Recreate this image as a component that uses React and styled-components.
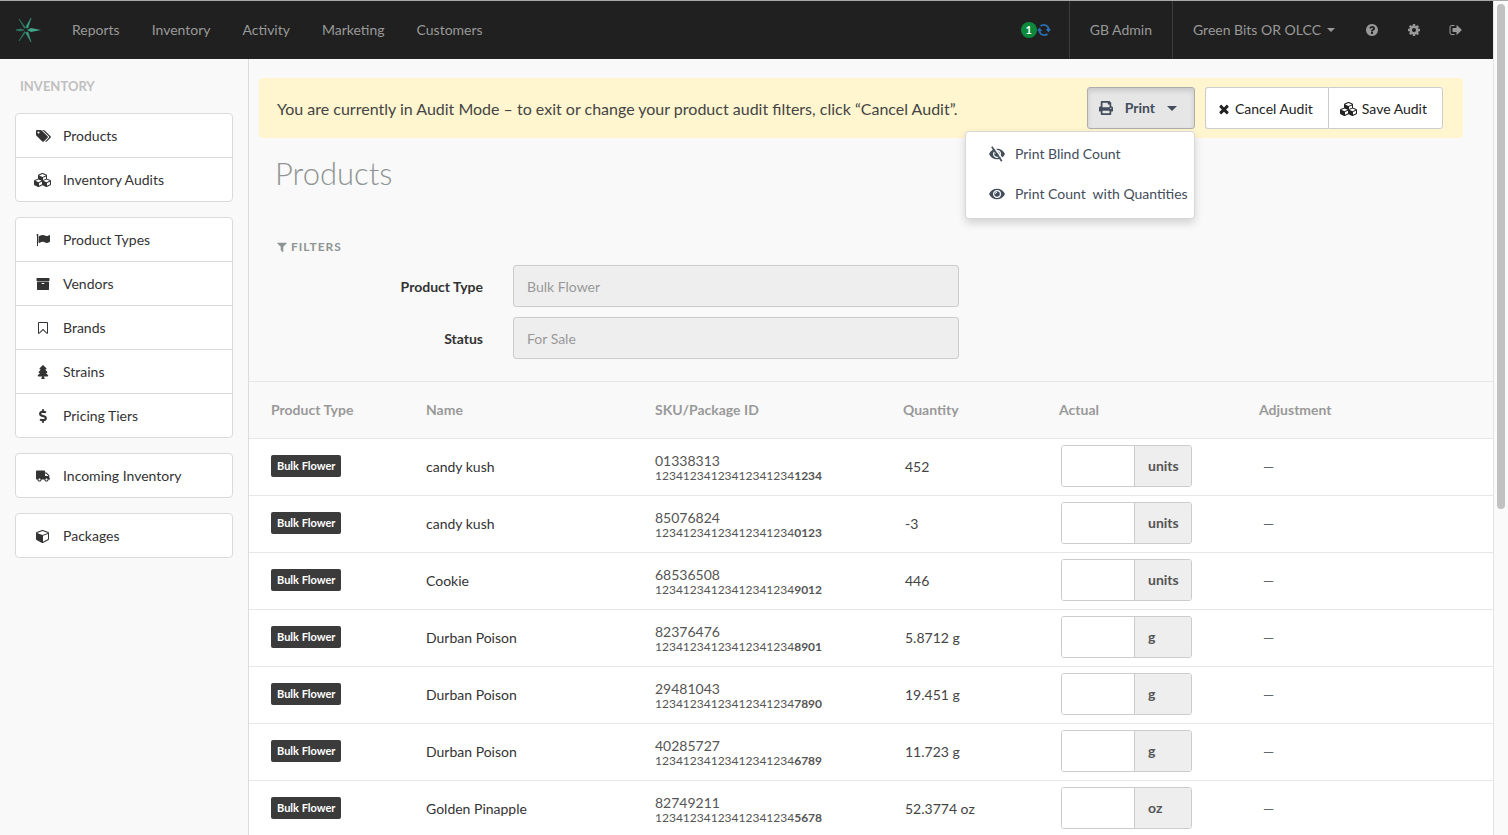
import React from "react";
import styled, { createGlobalStyle } from "styled-components";
import { FaTree, FaDollarSign, FaTruck, FaPrint } from "react-icons/fa";

const GlobalStyle = createGlobalStyle`
  *, *::before, *::after { box-sizing: border-box; }
  body {
    margin: 0;
    background: #f9f9f9;
    color: #333;
    font: 14px/20px Lato, "Open Sans", sans-serif;
  }
  button, input { font: inherit; color: inherit; }
  a { color: inherit; text-decoration: none; }
`;

const PATHS = {
  signOut: "M704 1440q0 4 1 20t.5 26.5-3 23.5-10 19.5-20.5 6.5h-320q-119 0-203.5-84.5t-84.5-203.5v-704q0-119 84.5-203.5t203.5-84.5h320q13 0 22.5 9.5t9.5 22.5q0 4 1 20t.5 26.5-3 23.5-10 19.5-20.5 6.5h-320q-66 0-113 47t-47 113v704q0 66 47 113t113 47h312l11.5 1 11.5 3 8 5.5 7 9 2 13.5zm928-544q0 26-19 45l-544 544q-19 19-45 19t-45-19-19-45v-288h-448q-26 0-45-19t-19-45v-384q0-26 19-45t45-19h448v-288q0-26 19-45t45-19 45 19l544 544q19 19 19 45z",
  bookmark: "M1408 256h-1024v1242l423-406 89-85 89 85 423 406v-1242zm12-128q23 0 44 9 33 13 52.5 41t19.5 62v1289q0 34-19.5 62t-52.5 41q-19 8-44 8-48 0-83-32l-441-424-441 424q-36 33-83 33-23 0-44-9-33-13-52.5-41t-19.5-62v-1289q0-34 19.5-62t52.5-41q21-9 44-9h1048z",
  archive: "M1088 832q0-26-19-45t-45-19h-256q-26 0-45 19t-19 45 19 45 45 19h256q26 0 45-19t19-45zm576-192v960q0 26-19 45t-45 19h-1408q-26 0-45-19t-19-45v-960q0-26 19-45t45-19h1408q26 0 45 19t19 45zm64-448v256q0 26-19 45t-45 19h-1536q-26 0-45-19t-19-45v-256q0-26 19-45t45-19h1536q26 0 45 19t19 45z",
  close: "M1490 1322q0 40-28 68l-136 136q-28 28-68 28t-68-28l-294-294-294 294q-28 28-68 28t-68-28l-136-136q-28-28-28-68t28-68l294-294-294-294q-28-28-28-68t28-68l136-136q28-28 68-28t68 28l294 294 294-294q28-28 68-28t68 28l136 136q28 28 28 68t-28 68l-294 294 294 294q28 28 28 68z",
  filter: "M1595 295q17 41-14 70l-493 493v742q0 42-39 59-13 5-25 5-27 0-45-19l-256-256q-19-19-19-45v-486l-493-493q-31-29-14-70 17-39 59-39h1280q42 0 59 39z",
  help: "M1024 1376v-192q0-14-9-23t-23-9h-192q-14 0-23 9t-9 23v192q0 14 9 23t23 9h192q14 0 23-9t9-23zm256-672q0-88-55.5-163t-138.5-116-170-41q-243 0-371 213-15 24 8 42l132 100q7 6 19 6 16 0 25-12 53-68 86-92 34-24 86-24 48 0 85.5 26t37.5 59q0 38-20 61t-68 45q-63 28-115.5 86.5t-52.5 125.5v36q0 14 9 23t23 9h192q14 0 23-9t9-23q0-19 21.5-49.5t54.5-49.5q32-18 49-28.5t46-35 44.5-48 28-60.5 12.5-81zm384 192q0 209-103 385.5t-279.5 279.5-385.5 103-385.5-103-279.5-279.5-103-385.5 103-385.5 279.5-279.5 385.5-103 385.5 103 279.5 279.5 103 385.5z",
  cog: "M1152 896q0-106-75-181t-181-75-181 75-75 181 75 181 181 75 181-75 75-181zm512-109v222q0 12-8 23t-20 13l-185 28q-19 54-39 91 35 50 107 138 10 12 10 25t-9 23q-27 37-99 108t-94 71q-12 0-26-9l-138-108q-44 23-91 38-16 136-29 186-7 28-36 28h-222q-14 0-24.5-8.5t-11.5-21.5l-28-184q-49-16-90-37l-141 107q-10 9-25 9-14 0-25-11-126-114-165-168-7-10-7-23 0-12 8-23 15-21 51-66.5t54-70.5q-27-50-41-99l-183-27q-13-2-21-12.5t-8-23.5v-222q0-12 8-23t19-13l186-28q14-46 39-92-40-57-107-138-10-12-10-24 0-10 9-23 26-36 98.5-107.5t94.5-71.5q13 0 26 10l138 107q44-23 91-38 16-136 29-186 7-28 36-28h222q14 0 24.5 8.5t11.5 21.5l28 184q49 16 90 37l142-107q9-9 24-9 13 0 25 10 129 119 165 170 7 8 7 22 0 12-8 23-15 21-51 66.5t-54 70.5q26 50 41 98l183 28q13 2 21 12.5t8 23.5z",
  tags: "M448 448q0-53-37.5-90.5t-90.5-37.5-90.5 37.5-37.5 90.5 37.5 90.5 90.5 37.5 90.5-37.5 37.5-90.5zm1067 576q0 53-37 90l-491 492q-39 37-91 37-53 0-90-37l-715-716q-38-37-64.5-101t-26.5-117v-416q0-52 38-90t90-38h416q53 0 117 26.5t102 64.5l715 714q37 39 37 91zm384 0q0 53-37 90l-491 492q-39 37-91 37-36 0-59-14t-53-45l470-470q37-37 37-90 0-52-37-91l-715-714q-38-38-102-64.5t-117-26.5h224q53 0 117 26.5t102 64.5l715 714q37 39 37 91z",
  flag: "M320 256q0 72-64 110v1266q0 13-9.5 22.5t-22.5 9.5h-64q-13 0-22.5-9.5t-9.5-22.5v-1266q-64-38-64-110 0-53 37.5-90.5t90.5-37.5 90.5 37.5 37.5 90.5zm1472 64v763q0 25-12.5 38.5t-39.5 27.5q-215 116-369 116-61 0-123.5-22t-108.5-48-115.5-48-142.5-22q-192 0-464 146-17 9-33 9-26 0-45-19t-19-45v-742q0-32 31-55 21-14 79-43 236-120 421-120 107 0 200 29t219 88q38 19 88 19 54 0 117.5-21t110-47 88-47 54.5-21q26 0 45 19t19 45z",
  cube: "M896 1629l640-349v-636l-640 233v752zm-64-865l698-254-698-254-698 254zm832-252v768q0 35-18 65t-49 47l-704 384q-28 16-61 16t-61-16l-704-384q-31-17-49-47t-18-65v-768q0-40 23-73t61-47l704-256q22-8 44-8t44 8l704 256q38 14 61 47t23 73z",
  cubes: "M640 1632l384-192v-314l-384 164v342zm-64-454l404-173-404-173-404 173zm1088 454l384-192v-314l-384 164v342zm-64-454l404-173-404-173-404 173zm-448-293l384-165v-266l-384 164v267zm-64-379l441-189-441-189-441 189zm1088 518v416q0 36-19 67t-52 47l-448 224q-25 14-57 14t-57-14l-448-224q-4-2-7-4-2 2-7 4l-448 224q-25 14-57 14t-57-14l-448-224q-33-16-52-47t-19-67v-416q0-38 21.5-70t56.5-48l434-186v-400q0-38 21.5-70t56.5-48l448-192q23-10 50-10t50 10l448 192q35 16 56.5 48t21.5 70v400l434 186q36 16 57 48t21 70z",
};
const WIDTHS = { tags: 1920, cubes: 2304 };

function Glyph({ name, size = 14 }) {
  const w = WIDTHS[name] || 1792;
  return (
    <svg width={Math.round((size * w) / 1792)} height={size} viewBox={`0 0 ${w} 1792`} fill="currentColor" aria-hidden="true">
      <path d={PATHS[name]} />
    </svg>
  );
}

function Caret({ size = 8 }) {
  return (
    <svg width={size} height={size / 2} viewBox="0 0 8 4" fill="currentColor" aria-hidden="true">
      <path d="M0 0h8L4 4z" />
    </svg>
  );
}

function SyncIcon() {
  return (
    <svg width="14" height="14" viewBox="0 0 14 14" fill="none" stroke="currentColor" strokeWidth="1.8" aria-hidden="true">
      <path d="M3.500 3.200A4.800 4.800 0 0 1 11.600 6.500M10.500 10.800A4.800 4.800 0 0 1 2.400 7.500" />
      <path d="M8.800 6H14l-2.500 3.600zM5.200 8H0l2.500-3.600z" fill="currentColor" stroke="none" />
    </svg>
  );
}

function Eye({ off }) {
  return (
    <svg width="16" height="16" viewBox="0 0 16 16" fill="none" aria-hidden="true">
      <path d="M0 8C3 1 13 1 16 8 13 15 3 15 0 8z" fill="currentColor" />
      <circle cx="8" cy="8" r="3.4" stroke="#fff" strokeWidth="1.2" />
      <path d="M6.200 8A1.800 1.800 0 0 1 8 6.200" stroke="#fff" strokeWidth="1" />
      {off && (
        <>
          <path d="M4.500 0l10 14.500" stroke="#fff" strokeWidth="1.5" />
          <path d="M2.800.8l10 14.500" stroke="currentColor" strokeWidth="1.6" />
        </>
      )}
    </svg>
  );
}

const Frame = styled.div`
  display: flex;
  height: 100vh;
  overflow: hidden;
  border-top: 1px solid #a8a8a8;
`;
const Page = styled.div`
  flex: 1;
  min-width: 0;
  display: flex;
  flex-direction: column;
`;
const Track = styled.div`
  flex: none;
  width: 15px;
  padding: 3px;
  background: #fafafa;
  border-left: 1px solid #e4e4e4;
`;
const Thumb = styled.div`
  width: 8px;
  height: 61%;
  border-radius: 4px;
  background: #c1c1c1;
`;

const TopBar = styled.header`
  flex: none;
  display: flex;
  align-items: stretch;
  height: 58px;
  padding: 0 16px;
  background: #202020;
  color: #999;
`;
const Brand = styled.a`
  display: flex;
  align-items: center;
  margin-right: 15px;
`;
const Nav = styled.nav`
  display: flex;
`;
const NavLink = styled.a`
  display: flex;
  align-items: center;
  gap: 6px;
  padding: 0 16px;
`;
const Tools = styled.div`
  display: flex;
  margin-left: auto;
`;
const Sync = styled.a`
  display: flex;
  align-items: center;
  padding-right: 18px;
  color: #2a6fb5;
`;
const Count = styled.span`
  width: 16px;
  height: 16px;
  border-radius: 8px;
  background: #0b8a3e;
  color: #fff;
  font-size: 11px;
  line-height: 16px;
  font-weight: 700;
  text-align: center;
`;
const ToolLink = styled(NavLink)`
  padding: 0 20px;
  border-left: 1px solid #3c3c3c;
`;
const StoreLink = styled(ToolLink)`
  padding-right: 16px;
`;
const IconLink = styled(NavLink)`
  padding: 0 14px;
`;

const Body = styled.div`
  flex: 1;
  min-height: 0;
  display: flex;
`;
const Sidebar = styled.aside`
  flex: none;
  width: 249px;
  padding: 17px 15px;
  border-right: 1px solid #dcdcdc;
`;
const SideTitle = styled.h2`
  margin: 0 0 17px 5px;
  font-size: 13px;
  line-height: 20px;
  font-weight: 700;
  color: #c0c0c0;
`;
const Group = styled.nav`
  margin-bottom: 15px;
  border: 1px solid #d9dada;
  border-radius: 4px;
  background: #fff;
`;
const SideLink = styled.a`
  display: flex;
  align-items: center;
  height: 44px;
  padding-left: 17px;
  & + & { border-top: 1px solid #d9dada; }
  &:first-child { height: 43px; }
`;
const SideIcon = styled.span`
  display: flex;
  justify-content: center;
  width: 20px;
  margin-right: 10px;
`;

const Main = styled.main`
  flex: 1;
  min-width: 0;
`;
const Banner = styled.section`
  display: flex;
  align-items: center;
  height: 60px;
  margin: 19px 30px 0 10px;
  padding: 0 20px 0 18px;
  border-radius: 4px;
  background: #fff6cf;
`;
const Message = styled.p`
  margin: 0 auto 0 0;
  padding-top: 2px;
  font-size: 16px;
  line-height: 24px;
  color: #444;
`;
const Dropdown = styled.div`
  position: relative;
  margin-right: 10px;
`;
const Button = styled.button`
  display: flex;
  align-items: center;
  gap: 4px;
  height: 42px;
  padding: 2px 15px 0 11px;
  border: 1px solid #ccc;
  border-radius: 3px;
  background: #fff;
  color: #222;
`;
const PrintButton = styled(Button)`
  gap: 12px;
  padding: 0 17px 0 11px;
  border-color: #adadad;
  background: #e6e6e6;
  box-shadow: inset 0 3px 5px rgba(0, 0, 0, 0.125);
  color: #434d5b;
  font-weight: 700;
`;
const ButtonGroup = styled.div`
  display: flex;
  & > :first-child { border-radius: 3px 0 0 3px; border-right: 0; }
  & > :last-child { border-radius: 0 3px 3px 0; }
`;
const Menu = styled.div`
  position: absolute;
  z-index: 1;
  top: 100%;
  right: 0;
  width: 230px;
  margin-top: 2px;
  padding: 2px 0 4px;
  border: 1px solid #d8d8d8;
  border-radius: 4px;
  background: #fff;
  box-shadow: 0 4px 8px rgba(0, 0, 0, 0.16);
`;
const MenuItem = styled.a`
  display: flex;
  align-items: center;
  gap: 10px;
  height: 40px;
  padding-left: 23px;
  color: #434d5b;
  white-space: pre;
`;

const Title = styled.h1`
  margin: 15px 0 0 26px;
  font-size: 31px;
  line-height: 40px;
  font-weight: 300;
  color: #8f9494;
`;
const FilterTitle = styled.h2`
  display: flex;
  align-items: center;
  gap: 3px;
  margin: 44px 0 8px 27px;
  font-size: 12px;
  line-height: 20px;
  font-weight: 700;
  letter-spacing: 1px;
  color: #8f9494;
`;
const FilterRow = styled.div`
  display: grid;
  grid-template-columns: 234px minmax(0, 446px);
  column-gap: 30px;
  align-items: center;
  margin-bottom: 10px;
`;
const Label = styled.label`
  padding-top: 2px;
  text-align: right;
  font-weight: 700;
`;
const Field = styled.input`
  height: 42px;
  padding: 0 13px;
  border: 1px solid #ccc;
  border-radius: 3px;
  background: #eee;
  color: #999;
`;

const Table = styled.table`
  width: 100%;
  margin-top: 22px;
  border-collapse: collapse;
  table-layout: fixed;
`;
const Col = styled.col`
  width: ${(p) => (p.$w ? `${p.$w}px` : "auto")};
`;
const Th = styled.th`
  height: 57px;
  padding: 0 0 0 22px;
  border-top: 1px solid #e7e7e7;
  text-align: left;
  font-weight: 700;
  color: #999;
`;
const Td = styled.td`
  height: 57px;
  padding: 0 0 0 22px;
  border-top: 1px solid #e7e7e7;
  background: #fff;
`;
const TagCell = styled(Td)`
  padding-bottom: 2px;
`;
const SkuCell = styled(Td)`
  padding-top: 2px;
`;
const QuantityCell = styled(Td)`
  padding-left: 24px;
  color: #444;
`;
const AmountCell = styled(Td)`
  padding: 0 0 2px 24px;
`;
const AdjustmentCell = styled(Td)`
  padding-left: 26px;
  color: #666;
`;
const Tag = styled.span`
  display: block;
  width: fit-content;
  padding: 0 6px;
  border-radius: 2px;
  background: #3b3b3b;
  color: #fff;
  font-size: 11px;
  line-height: 22px;
  font-weight: 700;
`;
const Sku = styled.div`
  line-height: 16px;
  color: #555;
`;
const PackageId = styled.div`
  font-size: 12px;
  line-height: 14px;
  color: #555;
`;
const Amount = styled.div`
  display: flex;
  width: 131px;
  height: 42px;
  border: 1px solid #ccc;
  border-radius: 3px;
  overflow: hidden;
`;
const AmountInput = styled.input`
  width: 72px;
  padding: 0 12px;
  border: 0;
  background: #fff;
`;
const Unit = styled.span`
  flex: 1;
  padding-left: 13px;
  border-left: 1px solid #ccc;
  background: #eee;
  line-height: 40px;
  font-weight: 700;
  color: #555;
`;

const GROUPS = [
  [["Products", <Glyph name="tags" />], ["Inventory Audits", <Glyph name="cubes" />]],
  [
    ["Product Types", <Glyph name="flag" />],
    ["Vendors", <Glyph name="archive" />],
    ["Brands", <Glyph name="bookmark" />],
    ["Strains", <FaTree size={14} />],
    ["Pricing Tiers", <FaDollarSign size={14} />],
  ],
  [["Incoming Inventory", <FaTruck size={14} />]],
  [["Packages", <Glyph name="cube" />]],
];

const PREFIX = "12341234123412341234";
const ROWS = [
  ["candy kush", "01338313", "1234", "452", "units"],
  ["candy kush", "85076824", "0123", "-3", "units"],
  ["Cookie", "68536508", "9012", "446", "units"],
  ["Durban Poison", "82376476", "8901", "5.8712 g", "g"],
  ["Durban Poison", "29481043", "7890", "19.451 g", "g"],
  ["Durban Poison", "40285727", "6789", "11.723 g", "g"],
  ["Golden Pinapple", "82749211", "5678", "52.3774 oz", "oz"],
];

export default function App() {
  return (
    <Frame>
      <GlobalStyle />
      <Page>
        <TopBar>
          <Brand href="#" aria-label="Home">
            <svg width="25" height="26" viewBox="0 0 25 26">
              <path d="M11 13l4-2 10 2-10 2z" fill="#3fa688" />
              <path d="M9.500 10.500L15 1l-3 10zM9.500 15.500L15 25l-3-10z" fill="#3a9c80" stroke="#3a9c80" strokeWidth=".5" />
              <path d="M8.500 11.500L3 2l6 8zM8.500 14.500L3 24l6-8zM8 13l-4-1-4 1 4 1z" fill="#2f7d66" stroke="#2f7d66" strokeWidth=".6" />
            </svg>
          </Brand>
          <Nav>
            {["Reports", "Inventory", "Activity", "Marketing", "Customers"].map((t) => (
              <NavLink href="#" key={t}>{t}</NavLink>
            ))}
          </Nav>
          <Tools>
            <Sync href="#" aria-label="Sync">
              <Count>1</Count>
              <SyncIcon />
            </Sync>
            <ToolLink href="#">GB Admin</ToolLink>
            <StoreLink href="#">Green Bits OR OLCC <Caret /></StoreLink>
            <IconLink href="#" aria-label="Help"><Glyph name="help" /></IconLink>
            <IconLink href="#" aria-label="Settings"><Glyph name="cog" /></IconLink>
            <IconLink href="#" aria-label="Sign out"><Glyph name="signOut" /></IconLink>
          </Tools>
        </TopBar>
        <Body>
          <Sidebar>
            <SideTitle>INVENTORY</SideTitle>
            {GROUPS.map((g) => (
              <Group key={g[0][0]}>
                {g.map(([text, icon]) => (
                  <SideLink href="#" key={text}><SideIcon>{icon}</SideIcon>{text}</SideLink>
                ))}
              </Group>
            ))}
          </Sidebar>
          <Main>
            <Banner>
              <Message>You are currently in Audit Mode – to exit or change your product audit filters, click “Cancel Audit”.</Message>
              <Dropdown>
                <PrintButton type="button" aria-expanded="true"><FaPrint size={14} />Print<Caret size={10} /></PrintButton>
                <Menu>
                  <MenuItem href="#"><Eye off />Print Blind Count</MenuItem>
                  <MenuItem href="#"><Eye />{"Print Count  with Quantities"}</MenuItem>
                </Menu>
              </Dropdown>
              <ButtonGroup>
                <Button type="button"><Glyph name="close" />Cancel Audit</Button>
                <Button type="button"><Glyph name="cubes" />Save Audit</Button>
              </ButtonGroup>
            </Banner>
            <Title>Products</Title>
            <FilterTitle><Glyph name="filter" size={12} />FILTERS</FilterTitle>
            <FilterRow>
              <Label htmlFor="type">Product Type</Label>
              <Field id="type" defaultValue="Bulk Flower" disabled />
            </FilterRow>
            <FilterRow>
              <Label htmlFor="status">Status</Label>
              <Field id="status" defaultValue="For Sale" disabled />
            </FilterRow>
            <Table>
              <colgroup>
                {[155, 229, 248, 156, 200, 0].map((w, i) => <Col key={i} $w={w} />)}
              </colgroup>
              <thead>
                <tr>
                  {["Product Type", "Name", "SKU/Package ID", "Quantity", "Actual", "Adjustment"].map((h) => (
                    <Th key={h} scope="col">{h}</Th>
                  ))}
                </tr>
              </thead>
              <tbody>
                {ROWS.map(([name, sku, tail, qty, unit]) => (
                  <tr key={sku}>
                    <TagCell><Tag>Bulk Flower</Tag></TagCell>
                    <Td>{name}</Td>
                    <SkuCell>
                      <Sku>{sku}</Sku>
                      <PackageId>{PREFIX}<b>{tail}</b></PackageId>
                    </SkuCell>
                    <QuantityCell>{qty}</QuantityCell>
                    <AmountCell>
                      <Amount>
                        <AmountInput aria-label={`Actual quantity for ${sku}`} />
                        <Unit>{unit}</Unit>
                      </Amount>
                    </AmountCell>
                    <AdjustmentCell>—</AdjustmentCell>
                  </tr>
                ))}
              </tbody>
            </Table>
          </Main>
        </Body>
      </Page>
      <Track><Thumb /></Track>
    </Frame>
  );
}
